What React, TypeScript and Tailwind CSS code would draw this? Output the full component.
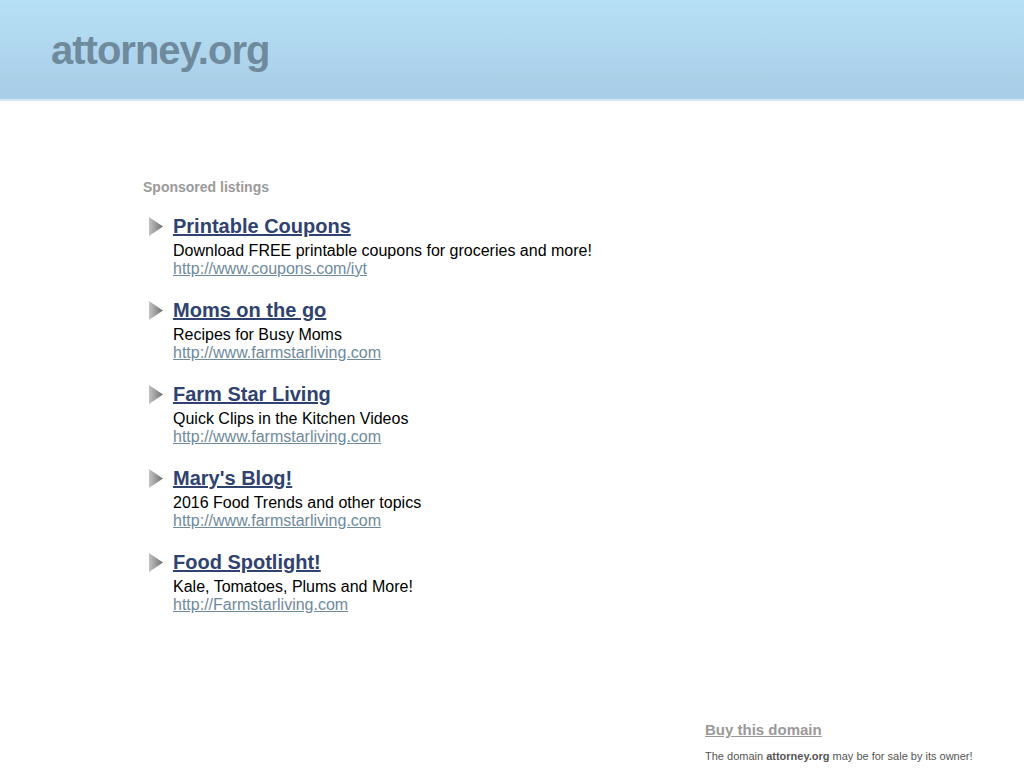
const listings = [
  {
    title: "Printable Coupons",
    desc: "Download FREE printable coupons for groceries and more!",
    url: "http://www.coupons.com/iyt",
  },
  {
    title: "Moms on the go",
    desc: "Recipes for Busy Moms",
    url: "http://www.farmstarliving.com",
  },
  {
    title: "Farm Star Living",
    desc: "Quick Clips in the Kitchen Videos",
    url: "http://www.farmstarliving.com",
  },
  {
    title: "Mary's Blog!",
    desc: "2016 Food Trends and other topics",
    url: "http://www.farmstarliving.com",
  },
  {
    title: "Food Spotlight!",
    desc: "Kale, Tomatoes, Plums and More!",
    url: "http://Farmstarliving.com",
  },
];

const Arrow = () => (
  <svg width="14" height="19" viewBox="0 0 14 19" className="shrink-0">
    <defs>
      <linearGradient id="arrowGrad" x1="0" y1="0" x2="1" y2="0">
        <stop offset="0" stopColor="#c4c4c4" />
        <stop offset="1" stopColor="#6f6f6f" />
      </linearGradient>
    </defs>
    <polygon points="0,0 14,9.5 0,19" fill="url(#arrowGrad)" />
  </svg>
);

export default function App() {
  return (
    <div className="min-h-[768px] bg-white font-['Liberation_Sans',Arial,sans-serif]">
      {/* header */}
      <div className="h-[101px] bg-gradient-to-b from-[#b6e0f6] to-[#a8cde6] border-b-2 border-[#d3e9f5] px-[51px] pt-[27px]">
        <div className="text-[40px] leading-[46px] font-bold tracking-[-1px] text-[#6f8a9d]">
          attorney.org
        </div>
      </div>

      <div className="pl-[143px] pt-[77px]">
        <div className="text-[14px] leading-[18px] font-bold text-[#9a9a9a]">
          Sponsored listings
        </div>

        <div className="mt-[18px] flex flex-col gap-[20px]">
          {listings.map((item, i) => (
            <div key={i} className="flex gap-[10px] pl-[6px]">
              <div className="pt-[3px]">
                <Arrow />
              </div>
              <div className="flex flex-col items-start">
                <a
                  href="#"
                  className="text-[20px] leading-[24px] font-bold text-[#2f4270] underline"
                >
                  {item.title}
                </a>
                <div className="text-[16px] leading-[20px] text-black mt-[3px]">
                  {item.desc}
                </div>
                <a
                  href="#"
                  className="text-[16px] leading-[18px] mt-[-1px] text-[#6f8a9d] underline"
                >
                  {item.url}
                </a>
              </div>
            </div>
          ))}
        </div>
      </div>

      <div className="pl-[705px] pt-[106px] flex flex-col items-start">
        <a
          href="#"
          className="text-[15px] leading-[20px] font-bold text-[#999999] underline"
        >
          Buy this domain
        </a>
        <div className="mt-[9px] text-[11px] leading-[14px] text-[#555555]">
          The domain <span className="font-bold">attorney.org</span> may be for
          sale by its owner!
        </div>
      </div>
    </div>
  );
}
